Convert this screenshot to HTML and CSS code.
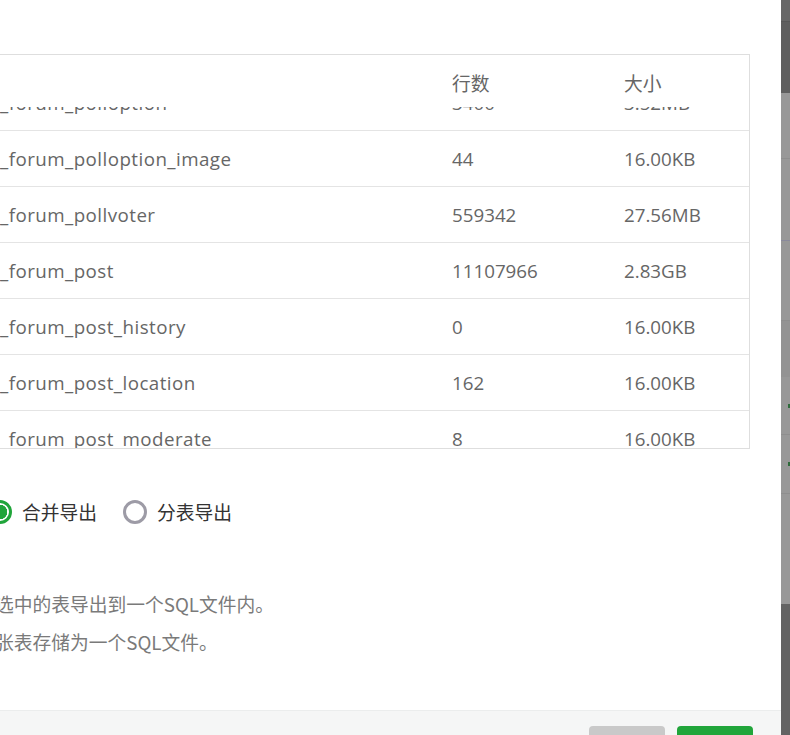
FILE: index.html
```html
<!DOCTYPE html>
<html lang="zh-CN">
<head>
<meta charset="utf-8">
<title>导出数据表</title>
<link rel="stylesheet" href="styles.css">
</head>
<body>
<div class="screen">
  <div class="dialog">
    <div class="content">
      <div class="table-box">
        <div class="thead">
          <span class="c-name"></span>
          <span class="c-rows">行数</span>
          <span class="c-size">大小</span>
        </div>
        <div class="tbody">
          <div class="tr"><span class="c-name">_forum_polloption</span><span class="c-rows">3400</span><span class="c-size">3.52MB</span></div>
          <div class="tr"><span class="c-name">_forum_polloption_image</span><span class="c-rows">44</span><span class="c-size">16.00KB</span></div>
          <div class="tr"><span class="c-name">_forum_pollvoter</span><span class="c-rows">559342</span><span class="c-size">27.56MB</span></div>
          <div class="tr"><span class="c-name">_forum_post</span><span class="c-rows">11107966</span><span class="c-size">2.83GB</span></div>
          <div class="tr"><span class="c-name">_forum_post_history</span><span class="c-rows">0</span><span class="c-size">16.00KB</span></div>
          <div class="tr"><span class="c-name">_forum_post_location</span><span class="c-rows">162</span><span class="c-size">16.00KB</span></div>
          <div class="tr"><span class="c-name">_forum_post_moderate</span><span class="c-rows">8</span><span class="c-size">16.00KB</span></div>
        </div>
      </div>
      <div class="radios">
        <label class="radio"><span class="dot checked"></span><span class="radio-text">合并导出</span></label>
        <label class="radio"><span class="dot"></span><span class="radio-text">分表导出</span></label>
      </div>
      <div class="desc">
        <p>选中的表导出到一个SQL文件内。</p>
        <p>张表存储为一个SQL文件。</p>
      </div>
    </div>
    <div class="footer">
      <button class="btn btn-gray" type="button"></button>
      <button class="btn btn-green" type="button"></button>
    </div>
  </div>
  <div class="backdrop">
    <div class="seg s1"></div>
    <div class="seg s2"></div>
    <div class="seg s3"></div>
    <div class="seg s4"></div>
    <div class="seg s5"></div>
    <div class="seg s6"></div>
    <div class="seg s7"><i class="mark"></i></div>
    <div class="seg s8"><i class="mark"></i></div>
    <div class="seg s9"></div>
    <div class="seg s10"></div>
  </div>
</div>
</body>
</html>
```
FILE: styles.css
```css
* { box-sizing: border-box; }
html, body { margin: 0; padding: 0; }
body {
  font-family: "Open Sans", "Noto Sans CJK SC", sans-serif;
  font-size: 18.75px;
  color: #333;
  background: #fff;
}
.screen {
  display: flex;
  width: 790px;
  height: 735px;
  overflow: hidden;
}
.dialog {
  width: 781px;
  height: 735px;
  background: #fff;
  display: grid;
  grid-template-rows: 710px 1fr;
  overflow: hidden;
}
.content {
  padding-top: 54px;
}
.table-box {
  width: 750px;
  height: 395px;
  border: 1px solid #dedede;
  border-left: none;
  overflow: hidden;
}
.thead, .tr {
  display: grid;
  grid-template-columns: 452px 172px 1fr;
  color: #666;
}
.thead {
  position: relative;
  z-index: 1;
  background: #fff;
  height: 52px;
  padding-top: 14px;
  line-height: 28px;
  font-family: "Noto Sans CJK SC", sans-serif;
}
.tbody {
  margin-top: -32px;
}
.tr {
  height: 56px;
  line-height: 55px;
  border-bottom: 1px solid #e4e4e4;
  white-space: nowrap;
}
.tr .c-name {
  letter-spacing: 0.45px;
}
.radios {
  margin-top: 51px;
  margin-left: -12px;
  display: flex;
  align-items: center;
  height: 24px;
}
.radio {
  display: flex;
  align-items: center;
  margin-right: 26px;
}
.dot {
  width: 24px;
  height: 24px;
  border-radius: 50%;
  border: 3px solid #9d9ba6;
  background: #fff;
  margin-right: 10px;
}
.dot.checked {
  border-color: #20a53a;
  background: radial-gradient(circle, #20a53a 0 7px, #fff 7.5px);
}
.radio-text {
  font-family: "Noto Sans CJK SC", sans-serif;
  color: #333;
  line-height: 24px;
}
.desc {
  margin-top: 61px;
  margin-left: -5px;
  color: #7a7a7a;
  font-family: "Noto Sans CJK SC", sans-serif;
}
.desc p {
  margin: 0;
  line-height: 37.5px;
  white-space: nowrap;
}
.footer {
  background: #f5f6f6;
  border-top: 1px solid #ebeded;
  padding: 15px 28px 0 0;
  display: flex;
  justify-content: flex-end;
  gap: 12px;
}
.btn {
  width: 76px;
  height: 36px;
  border: none;
  border-radius: 4px;
  padding: 0;
}
.btn-gray { background: #c9c9c9; }
.btn-green { background: #20a53a; }
.backdrop {
  flex: 1;
  display: flex;
  flex-direction: column;
}
.seg {
  display: flex;
  align-items: center;
  justify-content: flex-end;
  background: #989898;
}
.s1 { height: 21px; background: #676767; }
.s2 { height: 72px; background: #5f5f5f; border-top: 1px solid #585858; }
.s3 { height: 65px; }
.s4 { height: 82px; border-top: 1px solid #8e8e8e; }
.s5 { height: 80px; border-top: 1px solid #8a8a9c; }
.s6 { height: 57px; background: #939393; border-top: 1px solid #8e8e8e; }
.s7 { height: 57px; }
.s8 { height: 59px; border-top: 1px solid #8e8e8e; }
.s9 { height: 111px; border-top: 1px solid #8e8e8e; }
.s10 { height: 131px; background: #636363; }
.mark {
  width: 2px;
  height: 4px;
  background: #2f6b3c;
}
```
